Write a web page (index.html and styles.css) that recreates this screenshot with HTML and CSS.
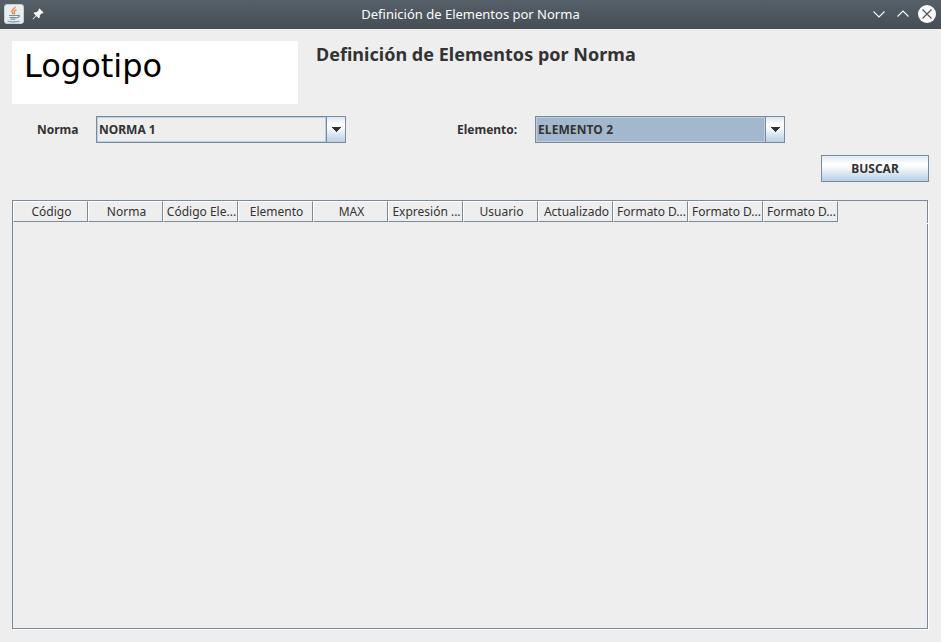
FILE: index.html
```html
<!DOCTYPE html>
<html lang="es">
<head>
<meta charset="utf-8">
<title>Definición de Elementos por Norma</title>
<link rel="stylesheet" href="styles.css">
</head>
<body>
<header class="titlebar">
  <svg class="app-icon" width="20" height="20" viewBox="0 0 20 20">
    <rect x=".5" y=".5" width="19" height="19" rx="2.500" fill="#e9edef" stroke="#c9d0d5"/>
    <path d="M11 2.500C11.500 5 7.500 5.500 7.800 7.500 7.900 8.800 9 9 9.300 10.300M12.500 5.800C10 6.700 9.500 7.500 10.500 8.700 11 9.300 10.500 10 10 10.300" fill="none" stroke="#e98442" stroke-width="1.300"/>
    <path d="M5 11.500h8M5.500 13.500h7M6.500 15.200h5M13 11.500c3.500-1 3 2-.5 2.500M3.500 17c3 1.300 9 1.300 12 0" fill="none" stroke="#7590a5" stroke-width="1.200"/>
  </svg>
  <svg class="pin" width="12" height="12" viewBox="0 0 12 12">
    <path d="M7.500.5 11.500 4.500 10.500 5.500 9.800 5.300 7.800 7.300 7.800 9.500 6.700 10.300 4.500 8.100 1 11.500.5 11 3.900 7.500 1.700 5.300 2.500 4.200 4.700 4.200 6.700 2.200 6.500 1.500Z" fill="#fcfcfc"/>
  </svg>
  <span class="window-title">Definición de Elementos por Norma</span>
  <svg class="controls" width="64" height="20" viewBox="0 0 64 20" fill="none">
    <path d="M1.500 7.500 7 13 12.500 7.500M25.500 12.500 31 7 36.500 12.500" stroke="#fcfcfc" stroke-width="1.100"/>
    <circle cx="55" cy="10" r="9" fill="#fcfcfc"/>
    <path d="M50.500 5.500l9 9M59.500 5.500l-9 9" stroke="#4b545c" stroke-width="1.200"/>
  </svg>
</header>
<main class="content">
  <div class="heading">
    <div class="logo"><span>Logotipo</span></div>
    <h1>Definición de Elementos por Norma</h1>
  </div>
  <div class="filters">
    <label class="label-norma">Norma</label>
    <div class="combo"><span class="value">NORMA 1</span><span class="arrow"><svg width="10" height="5" viewBox="0 0 10 5" shape-rendering="crispEdges"><path d="M0 0h10L5 5Z" fill="#333"/></svg></span></div>
    <label class="label-elemento">Elemento:</label>
    <div class="combo focused"><span class="value">ELEMENTO 2</span><span class="arrow"><svg width="10" height="5" viewBox="0 0 10 5" shape-rendering="crispEdges"><path d="M0 0h10L5 5Z" fill="#333"/></svg></span></div>
  </div>
  <div class="actions"><button class="search">BUSCAR</button></div>
  <section class="table">
    <div class="columns">
      <div>Código</div><div>Norma</div><div>Código Ele...</div><div>Elemento</div><div>MAX</div><div>Expresión ...</div><div>Usuario</div><div>Actualizado</div><div>Formato D...</div><div>Formato D...</div><div>Formato D...</div>
    </div>
    <i class="corner"></i>
  </section>
</main>
</body>
</html>
```
FILE: styles.css
```css
* { box-sizing: border-box; }
body {
  margin: 0;
  height: 642px;
  overflow: hidden;
  display: flex;
  flex-direction: column;
  background: #eee;
  color: #333;
  font: 12px/16px "Noto Sans", sans-serif;
}
.titlebar {
  flex: none;
  height: 29px;
  padding: 0 5px 0 4px;
  display: flex;
  align-items: center;
  background: linear-gradient(#566068, #454e55);
  color: #fcfcfc;
}
.app-icon { margin-top: -1px; }
.pin { margin: -1px 0 0 8px; }
.window-title {
  flex: 1;
  text-align: center;
  font-size: 13px;
  line-height: 18px;
  padding: 0 0 2px 25px;
}
.controls { margin-top: -1px; }
.content {
  flex: 1;
  display: flex;
  flex-direction: column;
  padding: 12px;
}
.heading { display: flex; height: 63px; gap: 18px; }
.logo {
  width: 286px;
  background: #fff;
  color: #000;
  padding: 5px 12px;
  font: 32px/40px "DejaVu Sans", sans-serif;
}
h1 {
  margin: 1px 0 0;
  font-size: 18px;
  line-height: 25px;
  letter-spacing: .02px;
  white-space: nowrap;
}
.filters {
  display: flex;
  align-items: center;
  height: 27px;
  margin-top: 12px;
  font-weight: 700;
}
.label-norma { width: 84px; padding-left: 25px; }
.label-elemento { width: 189px; padding-left: 111px; }
.combo {
  width: 250px;
  height: 27px;
  display: flex;
  border: 1px solid #7a8a99;
}
.value {
  flex: 1;
  border: 1px solid #b8cfe5;
  padding-left: 1px;
  line-height: 23px;
}
.focused .value { background: #a3b8cc; letter-spacing: .1px; }
.arrow {
  width: 20px;
  margin-right: 0;
  padding-left: 4px;
  border-left: 1px solid #7a8a99;
  display: flex;
  align-items: center;
}
.arrow { width: 19px; }
.arrow, .search { background: linear-gradient(#dde8f3 0%, #fff 30%, #fff 38%, #b8cfe5 100%); }
.actions { display: flex; justify-content: flex-end; margin-top: 12px; }
.search {
  width: 108px;
  height: 27px;
  padding: 0;
  border: 1px solid #7a8a99;
  color: #333;
  font: 700 12px/16px "Noto Sans", sans-serif;
}
.table {
  position: relative;
  flex: 1;
  margin: 18px 1px 1px 0;
  border: 1px solid #7a8a99;
  box-shadow: 1px 1px #fff;
}
.columns { display: flex; }
.columns div {
  width: 75px;
  height: 21px;
  padding-left: 2px;
  border: 1px solid #7a8a99;
  border-top-color: #fff;
  border-left-color: #fff;
  text-align: center;
  line-height: 19px;
  white-space: nowrap;
}
.corner {
  position: absolute;
  right: -1px;
  top: 22px;
  width: 1px;
  height: 1px;
  background: #fff;
}
```
